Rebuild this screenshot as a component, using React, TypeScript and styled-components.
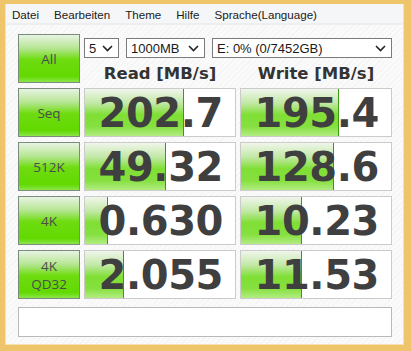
import React from 'react';
import styled, { createGlobalStyle } from 'styled-components';

const GlobalStyle = createGlobalStyle`
  html, body {
    margin: 0;
    padding: 0;
    background: #efc56b;
  }
  #root {
    width: 411px;
    height: 351px;
  }
`;

const Frame = styled.div`
  box-sizing: border-box;
  height: 351px;
  padding: 4px 7px 6px 5px;
  background: #efc56b;
`;

const Client = styled.div`
  box-sizing: border-box;
  height: 100%;
  display: flex;
  flex-direction: column;
  border: 1px solid #f7e2b4;
  border-top: none;
  background-color: #fafafa;
  background-image: repeating-linear-gradient(
    135deg,
    rgba(0, 0, 0, 0.025) 0px,
    rgba(0, 0, 0, 0.025) 1px,
    transparent 1px,
    transparent 4px
  );
`;

const MenuBar = styled.nav`
  box-sizing: border-box;
  flex: 0 0 auto;
  display: flex;
  gap: 15px;
  height: 21px;
  align-items: center;
  padding: 2px 0 0 6px;
  background: #f5f6f7;
  border-bottom: 2px solid #eceef0;
  font-family: 'Liberation Sans', Arial, sans-serif;
  font-size: 11.6px;
  color: #1a1a1a;
`;

const MenuItem = styled.span`
  white-space: nowrap;
`;

const Board = styled.div`
  flex: 0 0 auto;
  display: grid;
  grid-template-columns: 62px 152px 152px;
  grid-template-rows: repeat(5, 49px) auto;
  column-gap: 4px;
  row-gap: 5px;
  padding: 9px 0 0 12px;
`;

const TestButton = styled.button`
  box-sizing: border-box;
  width: 62px;
  height: 49px;
  margin: 0;
  padding: 0;
  border: 1px solid #7c8c7c;
  background: linear-gradient(
    to bottom,
    #e8f3e2 0%,
    #b6e694 28%,
    #6fdc10 52%,
    #62d900 88%,
    #8be64a 100%
  );
  font-family: 'Open Sans', 'DejaVu Sans', sans-serif;
  font-size: 13.5px;
  line-height: 18px;
  color: #4c4c4c;
  display: flex;
  align-items: center;
  justify-content: center;
  text-align: center;
`;

const TopPanel = styled.div`
  grid-column: 2 / 4;
  display: flex;
  flex-direction: column;
`;

const SelectRow = styled.div`
  display: flex;
  gap: 7px;
  margin-top: 4px;
`;

const Select = styled.div<{ $w: number }>`
  box-sizing: border-box;
  width: ${(p) => p.$w}px;
  height: 20px;
  border: 1px solid #7a7a7a;
  background: #ffffff;
  display: flex;
  align-items: center;
  justify-content: space-between;
  padding: 0 5px 0 4px;
  font-family: 'Liberation Sans', Arial, sans-serif;
  font-size: 13px;
  color: #1a1a1a;
  white-space: nowrap;
`;

const Headers = styled.div`
  display: grid;
  grid-template-columns: 152px 152px;
  column-gap: 4px;
  margin-top: 5px;
`;

const Heading = styled.div`
  text-align: center;
  font-family: 'DejaVu Sans', sans-serif;
  font-weight: bold;
  font-size: 16.5px;
  line-height: 22px;
  color: #333333;
`;

const Cell = styled.div`
  box-sizing: border-box;
  position: relative;
  border: 1px solid #cbcbcb;
  background: #ffffff;
  overflow: hidden;
`;

const Bar = styled.div`
  position: absolute;
  left: 0;
  top: 0;
  bottom: 0;
  border-right: 1px solid #3c9a10;
  background: linear-gradient(
    to bottom,
    #f0f6ec 0%,
    #c2e8a6 30%,
    #7fdf34 55%,
    #86e040 80%,
    #b2ec82 100%
  );
`;

const Value = styled.div`
  position: relative;
  height: 100%;
  display: flex;
  align-items: center;
  justify-content: flex-end;
  padding-right: 12px;
  font-family: 'DejaVu Sans', sans-serif;
  font-weight: bold;
  font-size: 40px;
  letter-spacing: -0.4px;
  color: #3f3f3f;
`;

const Comment = styled.div`
  grid-column: 1 / 4;
  box-sizing: border-box;
  height: 30px;
  margin-top: 3px;
  border: 1px solid #b9b9b9;
  background: #ffffff;
`;

const Chevron = () => (
  <svg width="11" height="7" viewBox="0 0 11 7">
    <path d="M1 1 L5.5 5.5 L10 1" fill="none" stroke="#222" strokeWidth="1.6" />
  </svg>
);

type Row = { label: React.ReactNode; read: string; readBar: number; write: string; writeBar: number };

const rows: Row[] = [
  { label: 'Seq', read: '202.7', readBar: 98, write: '195.4', writeBar: 97 },
  { label: '512K', read: '49.32', readBar: 80, write: '128.6', writeBar: 92 },
  { label: '4K', read: '0.630', readBar: 22, write: '10.23', writeBar: 60 },
  {
    label: (
      <>
        4K
        <br />
        QD32
      </>
    ),
    read: '2.055',
    readBar: 38,
    write: '11.53',
    writeBar: 60,
  },
];

const ResultCell: React.FC<{ value: string; bar: number }> = ({ value, bar }) => (
  <Cell>
    <Bar style={{ width: bar }} />
    <Value>{value}</Value>
  </Cell>
);

const App: React.FC = () => (
  <Frame>
    <GlobalStyle />
    <Client>
      <MenuBar>
        <MenuItem>Datei</MenuItem>
        <MenuItem>Bearbeiten</MenuItem>
        <MenuItem>Theme</MenuItem>
        <MenuItem>Hilfe</MenuItem>
        <MenuItem>Sprache(Language)</MenuItem>
      </MenuBar>
      <Board>
        <TestButton>All</TestButton>
        <TopPanel>
          <SelectRow>
            <Select $w={35}>
              5 <Chevron />
            </Select>
            <Select $w={79}>
              1000MB <Chevron />
            </Select>
            <Select $w={180}>
              E: 0% (0/7452GB) <Chevron />
            </Select>
          </SelectRow>
          <Headers>
            <Heading>Read [MB/s]</Heading>
            <Heading>Write [MB/s]</Heading>
          </Headers>
        </TopPanel>
        {rows.map((r, i) => (
          <React.Fragment key={i}>
            <TestButton>{r.label}</TestButton>
            <ResultCell value={r.read} bar={r.readBar} />
            <ResultCell value={r.write} bar={r.writeBar} />
          </React.Fragment>
        ))}
        <Comment />
      </Board>
    </Client>
  </Frame>
);

export default App;
